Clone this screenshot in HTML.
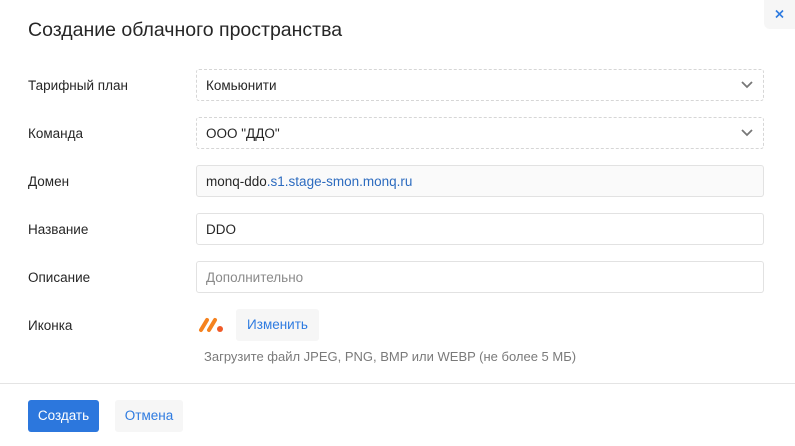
<!DOCTYPE html>
<html><head><meta charset="utf-8"><style>
*{box-sizing:border-box;margin:0;padding:0}
body{width:795px;height:446px;background:#fff;font-family:"Liberation Sans","DejaVu Sans",sans-serif;color:#262626;position:relative;overflow:hidden;font-size:13.5px}
.t{position:absolute;left:28px;top:19px;font-size:19.5px;color:#262626}
.close{position:absolute;left:764px;top:0;width:31px;height:29px;background:#f6f6f6;border-bottom-left-radius:6px}
.lbl{position:absolute;left:28px;font-size:13.5px}
.f{position:absolute;left:196px;width:568px;height:32px;border:1px solid #e2e2e2;border-radius:3px;padding-left:9px;line-height:31px;font-size:13.5px}
.d{border:1px dashed #d6d6d6}
.chev{position:absolute;right:10px;top:10px}
.btn{position:absolute;border-radius:3px;font-size:13.5px;text-align:center}
</style></head><body>
<div class="t">Создание облачного пространства</div>
<div class="close"><svg width="31" height="29"><path d="M12 10.5l7 7M19 10.5l-7 7" stroke="#2e7be0" stroke-width="1.6"/></svg></div>

<div class="lbl" style="top:78px">Тарифный план</div>
<div class="f d" style="top:69px">Комьюнити<svg class="chev" width="12" height="10"><path d="M1 2l5 5 5-5" stroke="#777" stroke-width="1.8" fill="none"/></svg></div>
<div class="lbl" style="top:126px">Команда</div>
<div class="f d" style="top:117px">ООО "ДДО"<svg class="chev" width="12" height="10"><path d="M1 2l5 5 5-5" stroke="#777" stroke-width="1.8" fill="none"/></svg></div>
<div class="lbl" style="top:174px">Домен</div>
<div class="f" style="top:165px;background:#fafafa">monq-ddo<span style="color:#2c6bbf">.s1.stage-smon.monq.ru</span></div>
<div class="lbl" style="top:222px">Название</div>
<div class="f" style="top:213px">DDO</div>
<div class="lbl" style="top:270px">Описание</div>
<div class="f" style="top:261px;color:#8a8a8a">Дополнительно</div>
<div class="lbl" style="top:318px">Иконка</div>
<svg style="position:absolute;left:196px;top:313px" width="32" height="22"><path d="M5 17l6-10M13 17l6-10" stroke="#f5821f" stroke-width="4" stroke-linecap="round"/><circle cx="24" cy="16" r="3" fill="#f05a28"/></svg>
<div class="btn" style="left:236px;top:309px;width:83px;height:32px;line-height:32px;background:#f6f6f6;color:#2e7be0">Изменить</div>
<div style="position:absolute;left:204px;top:349px;font-size:13px;color:#7a7a7a">Загрузите файл JPEG, PNG, BMP или WEBP (не более 5 МБ)</div>
<div style="position:absolute;left:0;top:383px;width:795px;height:1px;background:#e4e4e4"></div>
<div class="btn" style="left:28px;top:400px;width:71px;height:32px;line-height:32px;background:#2c77dd;color:#fff">Создать</div>
<div class="btn" style="left:115px;top:400px;width:68px;height:32px;line-height:32px;background:#f6f6f6;color:#2e7be0">Отмена</div>
</body></html>
